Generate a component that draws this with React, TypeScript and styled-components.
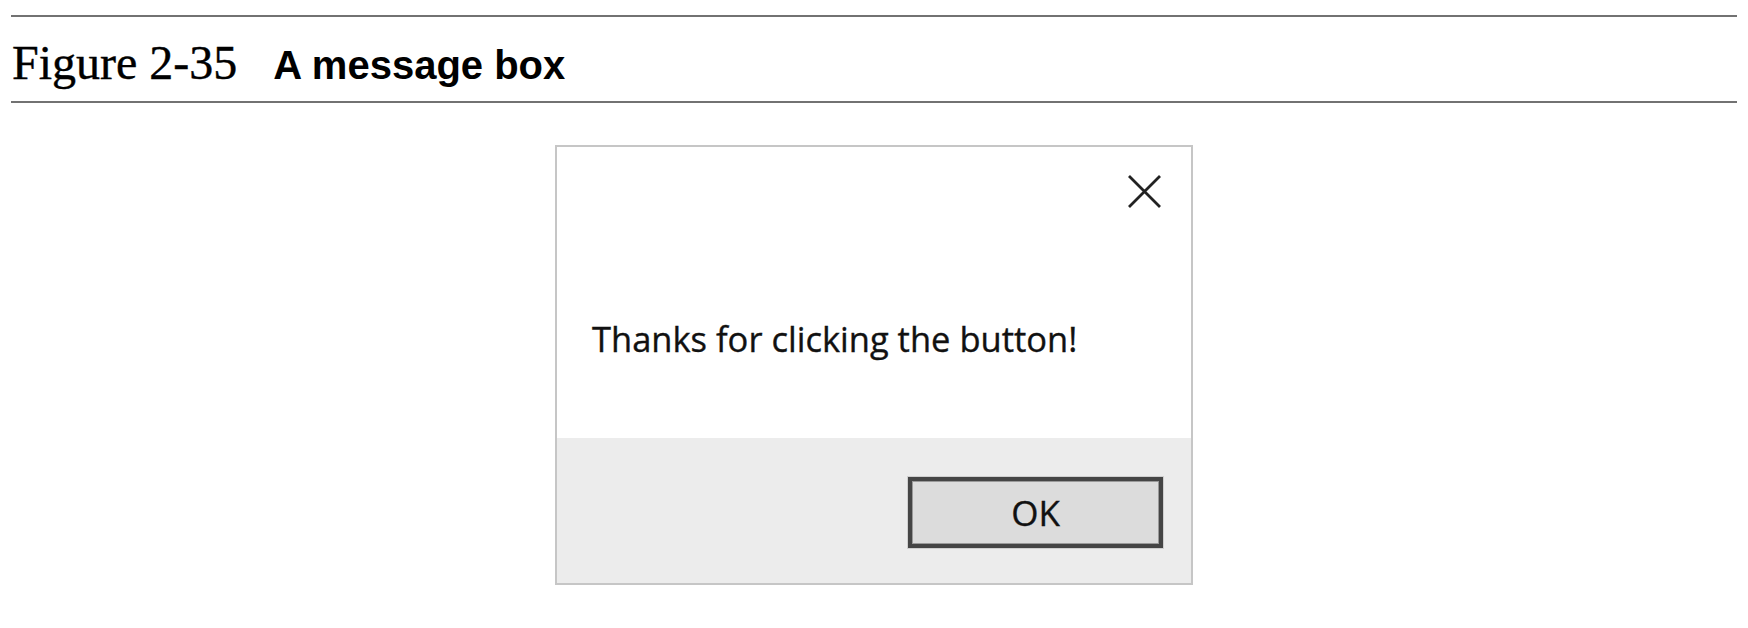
import React from "react";
import styled, { createGlobalStyle } from "styled-components";

const GlobalStyle = createGlobalStyle`
  html, body {
    margin: 0;
    padding: 0;
    background: #ffffff;
  }
  body {
    font-family: "Liberation Sans", Arial, sans-serif;
  }
`;

const Page = styled.div`
  width: 1748px;
  height: 628px;
  padding-top: 15px;
  box-sizing: border-box;
  overflow: hidden;
`;

const CaptionBar = styled.header`
  margin: 0 11px;
  height: 88px;
  box-sizing: border-box;
  border-top: 2px solid #727272;
  border-bottom: 2px solid #727272;
  padding: 22px 0 0 1px;
  display: flex;
  align-items: baseline;
  gap: 36px;
`;

const FigureLabel = styled.span`
  font-family: "Liberation Serif", "DejaVu Serif", serif;
  font-size: 48px;
  line-height: 48px;
  color: #000;
  -webkit-text-stroke: 0.4px #000;
`;

const FigureTitle = styled.span`
  font-family: "Liberation Sans", Arial, sans-serif;
  font-weight: 700;
  font-size: 40px;
  line-height: 48px;
  color: #000;
`;

const Dialog = styled.div`
  width: 638px;
  height: 440px;
  margin: 42px auto 0;
  box-sizing: border-box;
  border: 2px solid #c6c6c6;
  display: flex;
  flex-direction: column;
  background: #ffffff;
`;

const DialogBody = styled.div`
  height: 291px;
  display: flex;
  flex-direction: column;
  background: #ffffff;
`;

const CloseRow = styled.div`
  display: flex;
  justify-content: flex-end;
  padding: 28px 30px 0 0;
`;

const CloseButton = styled.button`
  width: 33px;
  height: 33px;
  padding: 0;
  border: none;
  background: transparent;
  display: flex;
  align-items: center;
  justify-content: center;
  cursor: pointer;
`;

const Message = styled.p`
  margin: 108px 0 0 35px;
  font-family: "Open Sans", "Noto Sans", sans-serif;
  font-size: 34.5px;
  line-height: 46px;
  color: #111;
  -webkit-text-stroke: 0.35px #111;
`;

const DialogFooter = styled.div`
  flex: 1;
  background: #ececec;
  display: flex;
  justify-content: flex-end;
  align-items: flex-start;
  padding: 39px 28px 0 0;
`;

const OkButton = styled.button`
  width: 255px;
  height: 71px;
  box-sizing: border-box;
  border: 4px solid #454545;
  box-shadow: 0 0 0 1px rgba(0, 0, 0, 0.12), inset 0 0 0 1px #9a9a9a;
  background: #dcdcdc;
  font-family: "Open Sans", "Noto Sans", sans-serif;
  font-size: 35px;
  color: #111;
  -webkit-text-stroke: 0.35px #111;
  display: flex;
  align-items: center;
  justify-content: center;
  padding: 0;
  cursor: pointer;
`;

export default function App() {
  return (
    <>
      <GlobalStyle />
      <Page>
        <CaptionBar>
          <FigureLabel>Figure 2-35</FigureLabel>
          <FigureTitle>A message box</FigureTitle>
        </CaptionBar>
        <Dialog>
          <DialogBody>
            <CloseRow>
              <CloseButton aria-label="Close">
                <svg width="33" height="33" viewBox="0 0 33 33">
                  <path d="M1 1 L32 32 M32 1 L1 32" stroke="#222" strokeWidth="2.8" fill="none" />
                </svg>
              </CloseButton>
            </CloseRow>
            <Message>Thanks for clicking the button!</Message>
          </DialogBody>
          <DialogFooter>
            <OkButton>OK</OkButton>
          </DialogFooter>
        </Dialog>
      </Page>
    </>
  );
}
